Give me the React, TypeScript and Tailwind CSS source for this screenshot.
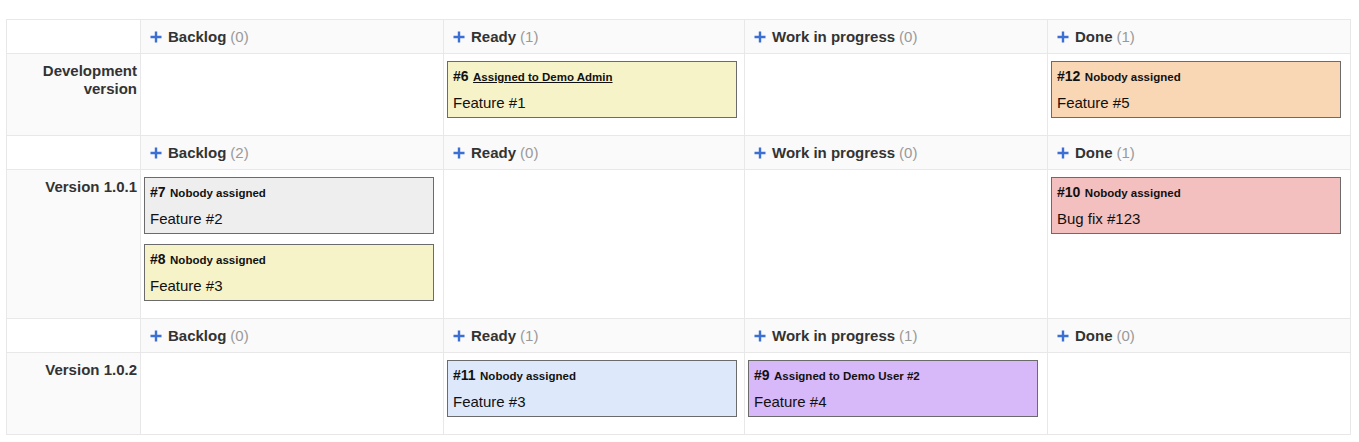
import React from "react";

type Card = { id: number; assignee: string; link?: boolean; title: string; color: string };
type Group = { label: string[]; counts: number[]; cells: Card[][] };

const COLS = ["Backlog", "Ready", "Work in progress", "Done"];

const groups: Group[] = [
  {
    label: ["Development", "version"],
    counts: [0, 1, 0, 1],
    cells: [
      [],
      [{ id: 6, assignee: "Assigned to Demo Admin", link: true, title: "Feature #1", color: "bg-[#f6f3c9]" }],
      [],
      [{ id: 12, assignee: "Nobody assigned", title: "Feature #5", color: "bg-[#f9d6b4]" }],
    ],
  },
  {
    label: ["Version 1.0.1"],
    counts: [2, 0, 0, 1],
    cells: [
      [
        { id: 7, assignee: "Nobody assigned", title: "Feature #2", color: "bg-[#eeeeee]" },
        { id: 8, assignee: "Nobody assigned", title: "Feature #3", color: "bg-[#f6f3c9]" },
      ],
      [],
      [],
      [{ id: 10, assignee: "Nobody assigned", title: "Bug fix #123", color: "bg-[#f4bfbf]" }],
    ],
  },
  {
    label: ["Version 1.0.2"],
    counts: [0, 1, 1, 0],
    cells: [
      [],
      [{ id: 11, assignee: "Nobody assigned", title: "Feature #3", color: "bg-[#dde9fa]" }],
      [{ id: 9, assignee: "Assigned to Demo User #2", title: "Feature #4", color: "bg-[#d7b8f8]" }],
      [],
    ],
  },
];

function Plus() {
  return (
    <svg width="12" height="12" viewBox="0 0 12 12" className="shrink-0">
      <path d="M6 0.5V11.5M0.5 6H11.5" stroke="#3b6fd3" strokeWidth="2.4" />
    </svg>
  );
}

function CardView({ c }: { c: Card }) {
  return (
    <div className={`w-[290px] border border-[#6b6b6b] ${c.color} px-[5px] pt-[5px] pb-[4px] mb-[10px] text-[#111]`}>
      <div className="h-[18px] leading-[18px] whitespace-nowrap">
        <span className="text-[14px] font-bold">#{c.id}</span>{" "}
        <span className={`text-[11.5px] font-bold ${c.link ? "underline" : ""}`}>{c.assignee}</span>
      </div>
      <div className="mt-[8px] h-[20px] leading-[20px] text-[15px]">{c.title}</div>
    </div>
  );
}

export default function App() {
  return (
    <div className="bg-white w-[1359px] h-[442px] pt-[19px] pl-[6px]" style={{ fontFamily: '"Liberation Sans", Arial, sans-serif' }}>
      <table className="w-[1345px] table-fixed border-collapse">
        <colgroup>
          <col className="w-[134px]" />
          <col className="w-[303px]" />
          <col className="w-[301px]" />
          <col className="w-[303px]" />
          <col />
        </colgroup>
        <tbody>
          {groups.map((g, gi) => (
            <React.Fragment key={gi}>
              <tr className="h-[34px]">
                <td className="border border-[#e8e8e8] bg-white p-0" />
                {COLS.map((name, i) => (
                  <td key={i} className="border border-[#e8e8e8] bg-[#fafafa] p-0 pl-[9px]">
                    <div className="flex items-center gap-[6px] text-[15px] leading-[18px] whitespace-nowrap">
                      <Plus />
                      <span className="font-bold text-[#333]">{name}</span>
                      <span className="text-[#999] -ml-[2px]">({g.counts[i]})</span>
                    </div>
                  </td>
                ))}
              </tr>
              <tr>
                <td className="border border-[#e8e8e8] bg-[#fafafa] align-top pt-[8px] pr-[3px] text-right text-[15px] leading-[18px] font-bold text-[#333]">
                  {g.label.map((l, li) => (
                    <div key={li}>{l}</div>
                  ))}
                </td>
                {g.cells.map((cards, ci) => (
                  <td key={ci} className="border border-[#e8e8e8] bg-white align-top pt-[7px] pb-[7px] pl-[3px] pr-0">
                    {cards.map((c) => (
                      <CardView key={c.id} c={c} />
                    ))}
                    {cards.length === 0 && <div className="h-[67px]" />}
                  </td>
                ))}
              </tr>
            </React.Fragment>
          ))}
        </tbody>
      </table>
    </div>
  );
}
